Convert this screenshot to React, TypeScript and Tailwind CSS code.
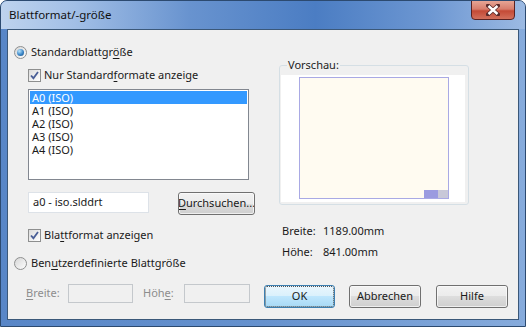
import { ReactNode } from 'react';

const U = ({ c }: { c: string }) => <span className="underline underline-offset-[2px]">{c}</span>;

const Radio = ({ checked }: { checked?: boolean }) => (
  <span className="w-[13px] h-[13px] shrink-0 rounded-full border border-[#8e8f8f] bg-[linear-gradient(135deg,#d6d6d6,#fdfdfd)] flex items-center justify-center">
    {checked && (
      <span className="w-[7px] h-[7px] rounded-full bg-[radial-gradient(circle_at_35%_30%,#b9e4fb,#3a86c8_55%,#174a7c)]" />
    )}
  </span>
);

const Checkbox = () => (
  <span className="w-[13px] h-[13px] shrink-0 border border-[#8e8f8f] bg-[linear-gradient(135deg,#dcdcdc,#ffffff)] flex items-center justify-center">
    <svg width="9" height="9" viewBox="0 0 9 9">
      <path d="M1 4.5 L3.4 7.2 L8 1" fill="none" stroke="#4a5f97" strokeWidth="1.8" />
    </svg>
  </span>
);

const Button = ({ children, def, w }: { children: ReactNode; def?: boolean; w: string }) => (
  <div
    className={`${w} h-[23px] rounded-[3px] border flex items-center justify-center overflow-hidden whitespace-nowrap ${
      def
        ? 'border-[#3c7fb1] bg-[linear-gradient(180deg,#eaf6fd_0%,#d9f0fc_50%,#bee6fd_50%,#a7d9f5_100%)]'
        : 'border-[#707070] bg-[linear-gradient(180deg,#f2f2f2_0%,#ebebeb_50%,#dddddd_50%,#cfcfcf_100%)]'
    }`}
  >
    <div
      className={`w-full h-full rounded-[2px] border flex items-center justify-center ${
        def ? 'border-dotted border-[#555]' : 'border-[#fcfcfc]/70'
      }`}
    >
      {children}
    </div>
  </div>
);

const formats = ['A0 (ISO)', 'A1 (ISO)', 'A2 (ISO)', 'A3 (ISO)', 'A4 (ISO)'];

export default function App() {
  return (
    <div className="w-[526px] h-[327px] flex flex-col overflow-hidden rounded-t-[7px] border border-[#2c4a70] bg-[linear-gradient(90deg,#5886c7_0%,#6692ce_50%,#86abdc_100%)] text-[11px] text-[#1a1a1a] font-['Noto_Sans','Open_Sans',sans-serif]">
      {/* Title bar */}
      <div className="h-[28px] shrink-0 flex justify-between bg-[linear-gradient(90deg,#bed3ee_0%,#a2bfe6_14%,#6893cf_36%,#4b7dc3_60%,#6d97d2_82%,#9cbae3_100%)]">
        <span className="ml-[8px] mt-[6px] text-[11.5px] leading-[16px] text-[#111]">Blattformat/-größe</span>
        <div className="mr-[10px] -mt-[1px] w-[44px] h-[20px] rounded-b-[4px] border border-[#5a2222] bg-[linear-gradient(180deg,#e6a595_0%,#d77d6c_45%,#c44a36_55%,#d3705c_100%)] flex items-center justify-center">
          <svg width="14" height="12" viewBox="0 0 14 12">
            <path d="M2 1.5 L12 10.5 M12 1.5 L2 10.5" stroke="#5a2a2a" strokeWidth="4" strokeLinecap="square" />
            <path d="M2.5 2 L11.5 10 M11.5 2 L2.5 10" stroke="#ffffff" strokeWidth="2.4" />
          </svg>
        </div>
      </div>

      {/* Client area */}
      <div className="mx-[6px] mb-[6px] flex-1 flex flex-col border border-[#3b5879] bg-[#f0f0f0]">
        <div className="flex">
          {/* Left column */}
          <div className="w-[271px] shrink-0 flex flex-col pl-[6px] pt-[14px]">
            <div className="h-[16px] flex items-center gap-[4px]">
              <Radio checked />
              <span>
                Standardblattgr<U c="ö" />ße
              </span>
            </div>
            <div className="h-[16px] mt-[7px] ml-[14px] flex items-center gap-[3px]">
              <Checkbox />
              <span>
                Nur Standard<U c="f" />ormate anzeige
              </span>
            </div>
            <div className="w-[221px] h-[91px] mt-[6px] ml-[14px] border border-[#828790] bg-white p-[1px]">
              {formats.map((f, i) => (
                <div
                  key={f}
                  className={`h-[13px] leading-[13px] pl-[2px] ${i === 0 ? 'bg-[#3399ff] text-white' : ''}`}
                >
                  {f}
                </div>
              ))}
            </div>
            <div className="mt-[12px] ml-[14px] flex items-start">
              <div className="w-[121px] h-[21px] border border-[#dde2e8] bg-white flex items-center pl-[4px]">
                a0 - iso.slddrt
              </div>
              <div className="ml-[29px]">
                <Button w="w-[77px]">
                  <U c="D" />
                  urchsuchen...
                </Button>
              </div>
            </div>
            <div className="h-[16px] mt-[12px] ml-[14px] flex items-center gap-[3px]">
              <Checkbox />
              <span>
                Bla<U c="t" />tformat anzeigen
              </span>
            </div>
            <div className="h-[16px] mt-[12px] flex items-center gap-[4px]">
              <Radio />
              <span>
                Ben<U c="u" />tzerdefinierte Blattgröße
              </span>
            </div>
          </div>

          {/* Right column */}
          <div className="flex flex-col pt-[28px]">
            <fieldset className="w-[190px] border border-[#d5dfe5] rounded-[3px] pl-[1px] pr-[3px] pt-[3px] pb-[2px]">
              <legend className="ml-[6px] px-[1px] leading-[14px] text-[#222]">Vorschau:</legend>
              <div className="h-[127px] bg-white pl-[18px] pt-[2px]">
                <div className="w-[150px] h-[122px] border border-[#a9a9e4] bg-[#fffbf1] flex items-end justify-end">
                  <div className="w-[24px] h-[8px] flex">
                    <div className="w-[14px] h-full bg-[#9b9be0]" />
                    <div className="flex-1 h-full bg-[#c8c8d8]" />
                  </div>
                </div>
              </div>
            </fieldset>
            <div className="h-[16px] mt-[18px] pl-[3px] flex items-center">
              <span className="w-[41px]">Breite:</span>
              <span>1189.00mm</span>
            </div>
            <div className="h-[16px] mt-[5px] pl-[3px] flex items-center">
              <span className="w-[41px]">Höhe:</span>
              <span>841.00mm</span>
            </div>
          </div>
        </div>

        {/* Bottom row */}
        <div className="mt-[13px] pl-[18px] flex items-start">
          <span className="w-[42px] h-[19px] flex items-center text-[#8d8d8d]">
            <span>
              <U c="B" />
              reite:
            </span>
          </span>
          <div className="w-[65px] h-[19px] border border-[#c4c8cc] bg-[#f0f0f0]" />
          <span className="ml-[10px] w-[41px] h-[19px] flex items-center text-[#8d8d8d]">
            <span>
              Höh<U c="e" />:
            </span>
          </span>
          <div className="w-[66px] h-[19px] border border-[#c4c8cc] bg-[#f0f0f0]" />
          <div className="ml-[14px] mt-[1px]">
            <Button def w="w-[71px]">OK</Button>
          </div>
          <div className="ml-[14px] mt-[1px]">
            <Button w="w-[72px]">Abbrechen</Button>
          </div>
          <div className="ml-[15px] mt-[1px]">
            <Button w="w-[72px]">Hilfe</Button>
          </div>
        </div>
      </div>
    </div>
  );
}
